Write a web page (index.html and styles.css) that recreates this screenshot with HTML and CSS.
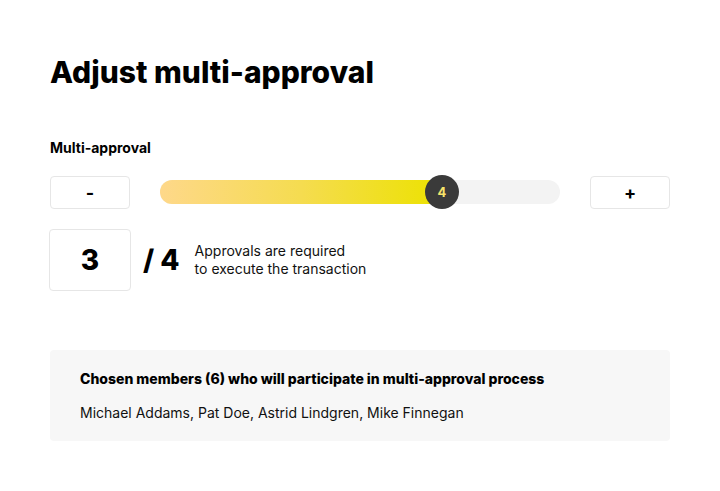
FILE: index.html
```html
<!DOCTYPE html>
<html>
<head>
<meta charset="utf-8">
<link rel="stylesheet" href="styles.css">
</head>
<body>
<main class="page">
  <h1 class="title">Adjust multi-approval</h1>
  <div class="label">Multi-approval</div>
  <div class="slider-row">
    <button class="step">-</button>
    <div class="track">
      <div class="fill" style="width: 70.5%"></div>
      <div class="thumb" style="left: 70.5%">4</div>
    </div>
    <button class="step">+</button>
  </div>
  <div class="count-row">
    <div class="count">3</div>
    <div class="total">/ 4</div>
    <div class="hint">Approvals are required<br>to execute the transaction</div>
  </div>
  <section class="members">
    <div class="members-title">Chosen members (6) who will participate in multi-approval process</div>
    <div class="members-list">Michael Addams, Pat Doe, Astrid Lindgren, Mike Finnegan</div>
  </section>
</main>
</body>
</html>
```
FILE: styles.css
```css
* { box-sizing: border-box; }
html, body { margin: 0; padding: 0; background: #fff; }
body { font-family: Inter, "Noto Sans", sans-serif; color: #000; }
.page { width: 720px; padding: 54px 50px 0 50px; }
.title { margin: 0; font-size: 30px; line-height: 36px; font-weight: 800; }
.label { margin-top: 50px; font-size: 14px; line-height: 16px; font-weight: 700; }
.slider-row { margin-top: 18px; display: flex; align-items: center; height: 36px; }
.step {
  width: 80px; height: 33px; border: 1px solid #e6e6e6; border-radius: 4px; background: #fff;
  font-family: Inter, sans-serif; font-size: 18px; font-weight: 700; color: #000; padding: 0;
}
.track { position: relative; flex: 1; margin: 0 30px; height: 24px; border-radius: 12px; background: #f3f3f3; }
.fill { height: 24px; border-radius: 12px 0 0 12px; background: linear-gradient(90deg, #fed88a 0%, #f5dc50 50%, #ece200 100%); }
.thumb {
  position: absolute; top: 50%; width: 34px; height: 34px; margin: -17px 0 0 -17px; border-radius: 50%;
  background: #3a3a3a; color: #f7e46a; font-size: 13px; font-weight: 700;
  display: flex; align-items: center; justify-content: center;
}
.count-row { margin-top: 19px; display: flex; align-items: center; }
.count {
  width: 82px; height: 62px; margin-left: -1px; border: 1px solid #e6e6e6; border-radius: 4px;
  display: flex; align-items: center; justify-content: center; font-size: 28px; font-weight: 800;
}
.total { margin-left: 12px; font-size: 28px; font-weight: 800; }
.hint { margin-left: 15px; font-size: 14px; line-height: 18px; color: #111; }
.members { margin-top: 59px; background: #f7f7f7; border-radius: 4px; padding: 21px 30px 22px 30px; height: 91px; }
.members-title { font-size: 14px; line-height: 16px; font-weight: 800; }
.members-list { margin-top: 17px; font-size: 14px; line-height: 17px; color: #111; }
```
